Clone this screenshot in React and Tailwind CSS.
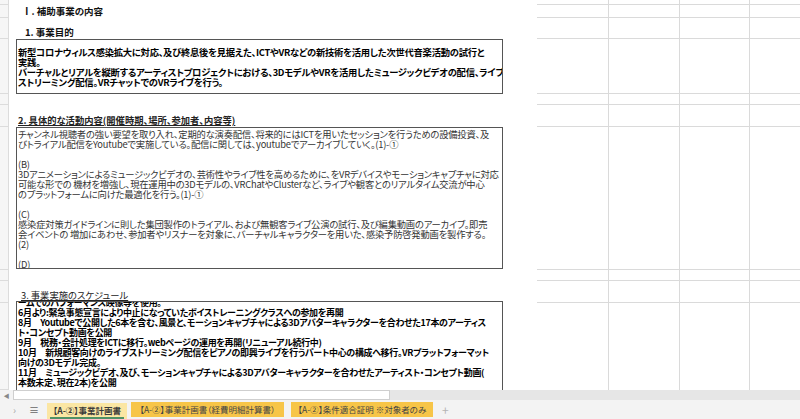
import React from 'react';

const jp = "font-['Noto_Sans_CJK_JP','Noto_Sans',sans-serif] [font-feature-settings:'palt']";

const box1 = [
  '新型コロナウィルス感染拡大に対応、及び終息後を見据えた、ICTやVRなどの新技術を活用した次世代音楽活動の試行と',
  '実践。',
  'バーチャルとリアルを縦断するアーティストプロジェクトにおける、3DモデルやVRを活用したミュージックビデオの配信、ライブ',
  'ストリーミング配信。VRチャットでのVRライブを行う。',
];

const box2 = [
  'チャンネル視聴者の強い要望を取り入れ、定期的な演奏配信、将来的にはICTを用いたセッションを行うための設備投資、及',
  'びトライアル配信をYoutubeで実施している。配信に関しては、youtubeでアーカイブしていく。(1)-①',
  '',
  '(B)',
  '3Dアニメーションによるミュージックビデオの、芸術性やライブ性を高めるために、をVRデバイスやモーションキャプチャに対応',
  '可能な形での 機材を増強し、現在運用中の3Dモデルの、VRChatやClusterなど、ライブや観客とのリアルタイム交流が中心',
  'のプラットフォームに向けた最適化を行う。(1)-①',
  '',
  '(C)',
  '感染症対策ガイドラインに則した集団製作のトライアル、および無観客ライブ公演の試行、及び編集動画のアーカイブ。即売',
  '会イベントの 増加にあわせ、参加者やリスナーを対象に、バーチャルキャラクターを用いた、感染予防啓発動画を製作する。',
  '(2)',
  '',
  '(D)',
];

const box3 = [
  'ームでのパフォーマンス映像等を使用。',
  '6月より:緊急事態宣言により中止になっていたボイストレーニングクラスへの参加を再開',
  '8月　Youtubeで公開した6本を含む、風景と、モーションキャプチャによる3Dアバターキャラクターを合わせた17本のアーティス',
  'ト・コンセプト動画を公開',
  '9月　税務・会計処理をICTに移行。webページの運用を再開(リニューアル続行中)',
  '10月　新規顧客向けのライブストリーミング配信をピアノの即興ライブを行うパート中心の構成へ移行。VRプラットフォーマット',
  '向けの3Dモデル完成。',
  '11月　ミュージックビデオ、及び、モーションキャプチャによる3Dアバターキャラクターを合わせたアーティスト・コンセプト動画(',
  '本数未定、現在2本)を公開',
];

const Lines = ({ lines }) =>
  lines.map((t, i) => (
    <div key={i} className="h-[10px] whitespace-nowrap leading-[10px]">
      {t || '\u00a0'}
    </div>
  ));

const rows = [
  { h: 'h-[5px]' },
  {
    h: 'h-[13px]',
    left: (
      <div className="flex h-full items-center pl-[13px] text-[9.5px] font-bold text-[#111]">Ⅰ. 補助事業の内容</div>
    ),
  },
  {
    h: 'h-[21px]',
    left: (
      <div className="flex h-full items-end pb-[1px] pl-[16px] text-[9.5px] font-bold leading-[12px] text-[#111]">1. 事業目的</div>
    ),
  },
  {
    h: 'h-[55px]',
    left: (
      <div className="ml-[7px] flex h-full w-[487px] flex-col justify-center overflow-hidden border border-[#555] pl-[1px] text-[9.3px] font-bold tracking-[-0.25px] text-black">
        <Lines lines={box1} />
      </div>
    ),
  },
  { h: 'h-[11px]' },
  {
    h: 'h-[22px]',
    left: (
      <div className="flex h-full items-end pb-[1px] pl-[9px] text-[9.3px] font-semibold leading-[12px] text-[#222]">
        <span className="underline underline-offset-[1px]">2. 具体的な活動内容(開催時期、場所、参加者、内容等)</span>
      </div>
    ),
  },
  {
    h: 'h-[143px]',
    left: (
      <div className="ml-[7px] h-[142px] w-[487px] overflow-hidden border border-[#555] pl-[1px] pt-[1px] text-[9.3px] tracking-[-0.2px] text-[#333]">
        <Lines lines={box2} />
      </div>
    ),
  },
  { h: 'h-[11px]' },
  {
    h: 'h-[22px]',
    left: (
      <div className="flex h-full items-end pb-[2px] pl-[12px] text-[9.3px] leading-[12px] text-[#222]">
        <span className="underline underline-offset-[1px]">3. 事業実施のスケジュール</span>
      </div>
    ),
  },
  {
    h: 'h-[87px]',
    last: true,
    left: (
      <div className="-mt-[2px] ml-[7px] h-[95px] w-[487px] overflow-hidden border border-[#555] pl-[1px] text-[9px] font-bold tracking-[-0.35px] text-black">
        <div className="-mt-[4px]">
          <Lines lines={box3} />
        </div>
      </div>
    ),
  },
];

const Grid = ({ last }) => {
  const b = last ? '' : 'border-b';
  return (
    <>
      <div className={`w-[72px] shrink-0 border-r border-[#dadada] ${b}`} />
      <div className={`w-[71px] shrink-0 border-r border-[#dadada] ${b}`} />
      <div className={`w-[70px] shrink-0 border-r border-[#dadada] ${b}`} />
      <div className={`flex-1 border-[#dadada] ${b}`} />
    </>
  );
};

export default function App() {
  return (
    <div className={`flex h-[419px] w-[800px] flex-col overflow-hidden bg-white ${jp}`}>
      {/* sheet */}
      <div className="flex h-[390px] flex-col overflow-hidden">
        {rows.map((r, i) => (
          <div key={i} className={`flex shrink-0 ${r.h}`}>
            <div className="w-[9px] shrink-0 border-b border-r border-[#dcdcdc] bg-[#f6f6f6]" />
            <div className="w-[528px] shrink-0">{r.left}</div>
            <Grid last={r.last} />
          </div>
        ))}
      </div>

      {/* horizontal scrollbar */}
      <div className="flex h-[10px] shrink-0 bg-[#e6e6e6]">
        <div className="flex w-[13px] items-center justify-center bg-[#f3f3f3] text-[6px] text-[#888]">◀</div>
        <div className="w-[377px] border border-[#cfcfcf] bg-white" />
      </div>

      {/* sheet tabs */}
      <div className="flex h-[19px] shrink-0 items-end bg-[#f3f3f3] text-[8.5px] text-[#444]">
        <div className="flex h-full w-[47px] items-center">
          <span className="ml-[13px] text-[10px] text-[#aaa]">›</span>
          <span className="ml-[13px] text-[10px] leading-none text-[#666]">≡</span>
        </div>
        <div className="flex h-[16px] w-[80px] flex-col bg-[#fbe6a3]">
          <div className="flex flex-1 items-center justify-center font-semibold text-[#3a3a3a]">【A-②】事業計画書</div>
          <div className="mx-[3px] h-[2px] bg-[#4f9266]" />
        </div>
        <div className="mb-[2px] ml-[4px] flex h-[15px] w-[153px] items-center justify-center bg-[#f7c548]">
          【A-②】事業計画書（経費明細計算書）
        </div>
        <div className="mb-[2px] ml-[7px] flex h-[15px] w-[142px] items-center justify-center bg-[#f7c548]">
          【A-②】条件適合証明 ※対象者のみ
        </div>
        <div className="mb-[3px] ml-[9px] text-[12px] leading-none text-[#b5b5b5]">+</div>
      </div>
    </div>
  );
}
